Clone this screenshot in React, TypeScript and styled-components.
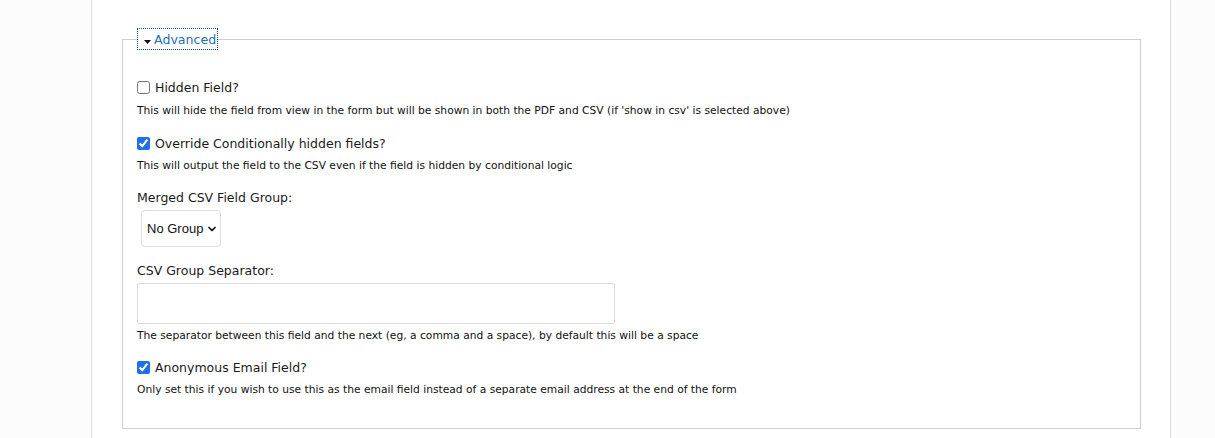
import React from 'react'
import styled, { createGlobalStyle } from 'styled-components'
import { ChevronDown } from 'lucide-react'

const GlobalStyle = createGlobalStyle`
    html, body {
        margin: 0;
        padding: 0;
        height: 100%;
    }
    body {
        font-family: "DejaVu Sans", Verdana, sans-serif;
        color: #1d1d1d;
        background: #fcfcfc;
    }
    #root {
        height: 100%;
    }
`

const Page = styled.div`
    display: flex;
    height: 100%;
    min-height: 438px;
`

const Gutter = styled.div<{ $side: 'left' | 'right' }>`
    width: ${p => (p.$side === 'left' ? '91px' : '44px')};
    background: #fcfcfc;
    border-${p => (p.$side === 'left' ? 'right' : 'left')}: 1px solid #dcdcdc;
`

const Main = styled.main`
    flex: 1;
    background: #fff;
    padding: 29px 29px 0 30px;
`

const Fieldset = styled.fieldset`
    margin: 0;
    border: 1px solid #cfcfcf;
    padding: 29px 14px 30px 14px;
    display: flex;
    flex-direction: column;
`

const Legend = styled.legend`
    padding: 0;
    margin-left: 1px;
`

const Toggle = styled.a`
    display: inline-flex;
    align-items: center;
    gap: 3px;
    height: 20px;
    padding: 0 1px 0 6px;
    outline: 1px dotted #1b4f80;
    color: #2271b1;
    font-size: 12.6px;
    text-decoration: none;
    cursor: pointer;
`

const Group = styled.div<{ $gap?: number }>`
    display: flex;
    flex-direction: column;
    align-items: flex-start;
    margin-bottom: ${p => p.$gap ?? 16}px;
`

const CheckRow = styled.label`
    display: flex;
    align-items: center;
    height: 18px;
    font-size: 12.5px;
    color: #1a1a1a;

    input {
        width: 13px;
        height: 13px;
        margin: 0 5px 0 0;
        accent-color: #1f6fe5;
    }
`

const Desc = styled.p<{ $top?: number }>`
    margin: ${p => p.$top ?? 5}px 0 0;
    font-size: 10.7px;
    line-height: 16px;
    color: #111;
`

const FieldLabel = styled.label`
    font-size: 12.5px;
    line-height: 18px;
    color: #1a1a1a;
`

const SelectWrap = styled.div`
    position: relative;
    margin: 3px 0 0 4px;
`

const Select = styled.select`
    appearance: none;
    width: 80px;
    height: 37px;
    padding: 0 0 0 5px;
    border: 1px solid #dedede;
    border-radius: 4px;
    background: #fff;
    font-family: "Liberation Sans", Arial, sans-serif;
    font-size: 13px;
    color: #111;
`

const Caret = styled(ChevronDown)`
    position: absolute;
    right: 3px;
    top: 13px;
    pointer-events: none;
`

const TextInput = styled.input`
    box-sizing: border-box;
    width: 478px;
    height: 41px;
    margin-top: 3px;
    border: 1px solid #dcdcdc;
    border-radius: 2px;
    background: #fff;
`

const Arrow = () => (
    <svg width="7" height="4" viewBox="0 0 7 4" style={{ marginTop: 6 }}>
        <path d="M0 0h7L3.5 4z" fill="#111" />
    </svg>
)

export default function App() {
    return (
        <>
            <GlobalStyle />
            <Page>
                <Gutter $side="left" />
                <Main>
                    <Fieldset>
                        <Legend>
                            <Toggle>
                                <Arrow />
                                Advanced
                            </Toggle>
                        </Legend>

                        <Group $gap={15}>
                            <CheckRow>
                                <input type="checkbox" />
                                Hidden Field?
                            </CheckRow>
                            <Desc $top={7}>
                                This will hide the field from view in the form but will be shown in both the PDF and CSV (if 'show in csv' is selected above)
                            </Desc>
                        </Group>

                        <Group $gap={15}>
                            <CheckRow>
                                <input type="checkbox" defaultChecked />
                                Override Conditionally hidden fields?
                            </CheckRow>
                            <Desc $top={6}>
                                This will output the field to the CSV even if the field is hidden by conditional logic
                            </Desc>
                        </Group>

                        <Group $gap={15}>
                            <FieldLabel>Merged CSV Field Group:</FieldLabel>
                            <SelectWrap>
                                <Select defaultValue="none">
                                    <option value="none">No Group</option>
                                </Select>
                                <Caret size={12} strokeWidth={3.5} color="#111" />
                            </SelectWrap>
                        </Group>

                        <Group $gap={14}>
                            <FieldLabel>CSV Group Separator:</FieldLabel>
                            <TextInput type="text" />
                            <Desc $top={4}>
                                The separator between this field and the next (eg, a comma and a space), by default this will be a space
                            </Desc>
                        </Group>

                        <Group $gap={0}>
                            <CheckRow>
                                <input type="checkbox" defaultChecked />
                                Anonymous Email Field?
                            </CheckRow>
                            <Desc $top={6}>
                                Only set this if you wish to use this as the email field instead of a separate email address at the end of the form
                            </Desc>
                        </Group>
                    </Fieldset>
                </Main>
                <Gutter $side="right" />
            </Page>
        </>
    )
}
